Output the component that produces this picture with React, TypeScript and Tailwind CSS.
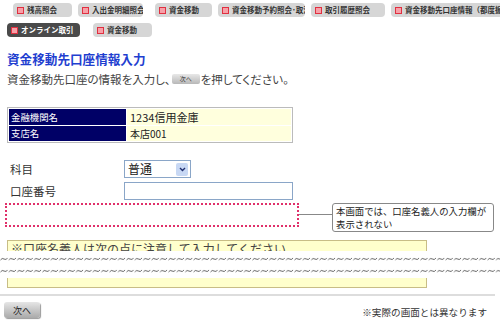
import React from 'react'

const jp = { fontFamily: '"Noto Sans CJK JP", "Noto Sans", sans-serif' }

function Tab({ label, dark = false, className = '' }: { label: string; dark?: boolean; className?: string }) {
  return (
    <div
      className={`flex h-[14px] shrink-0 items-center gap-[3px] overflow-hidden whitespace-nowrap rounded-[4px] pl-[4px] text-[7.5px] font-bold leading-none ${
        dark ? 'bg-[#4a4a4a] text-white' : 'bg-[#d6d6d6] text-[#333]'
      } ${className}`}
    >
      <span className="h-[7px] w-[7px] shrink-0 border border-[#e03040] bg-[#f7a0a8]" />
      {label}
    </div>
  )
}

function Wave() {
  return (
    <svg width="500" height="6" className="block">
      <defs>
        <pattern id="w" width="8.4" height="6" patternUnits="userSpaceOnUse">
          <path d="M0.5 4 Q2 1.5 4 3 T7.5 2" fill="none" stroke="#555" strokeWidth="0.9" />
        </pattern>
      </defs>
      <rect width="500" height="6" fill="url(#w)" />
    </svg>
  )
}

export default function App() {
  return (
    <div className="relative h-[323px] w-[500px] overflow-hidden bg-white text-[#333]" style={jp}>
      {/* tabs */}
      <div className="flex h-[17px] items-end gap-[6px] pl-[13px]">
        <Tab label="残高照会" className="w-[59px]" />
        <Tab label="入出金明細照会" className="w-[65px]" />
        <Tab label="資金移動" className="ml-[6px] w-[57px]" />
        <Tab label="資金移動予約照会･取消" className="w-[87px]" />
        <Tab label="取引履歴照会" className="w-[74px]" />
        <Tab label="資金移動先口座情報（都度振込）" className="w-[120px]" />
      </div>
      <div className="flex h-[20px] items-end gap-[13px] pl-[7px]">
        <Tab dark label="オンライン取引" className="w-[73px]" />
        <Tab label="資金移動" className="w-[59px]" />
      </div>

      {/* title */}
      <h1 className="h-[30px] pl-[7px] pt-[14px] text-[12.6px] font-bold leading-[16px] text-[#1f3fd0]">
        資金移動先口座情報入力
      </h1>
      <p className="flex h-[20px] items-center pl-[7px] pt-[3px] text-[11.5px] leading-[16px] text-[#444] [font-feature-settings:'palt']">
        <span>資金移動先口座の情報を入力し、</span>
        <span className="mx-[1px] inline-flex h-[10px] w-[28px] items-center justify-center rounded-[2px] bg-gradient-to-b from-[#e8e8e8] to-[#b8b8b8] text-[6px] leading-none text-[#333]">
          次へ
        </span>
        を押してください。
      </p>

      {/* bank table */}
      <div className="ml-[7px] mt-[20px] h-[36px] w-[286px] border border-[#bbb] p-[1px]">
        <div className="flex h-[16px] text-[9.4px] leading-[16px]">
          <div className="w-[117px] bg-[#000066] pl-[2px] text-white">金融機関名</div>
          <div className="ml-[1px] flex-1 bg-[#ffffdd] pl-[3px] text-[11px] text-[#222]">1234信用金庫</div>
        </div>
        <div className="mt-[1px] flex h-[15px] text-[9.4px] leading-[15px]">
          <div className="w-[117px] bg-[#000066] pl-[2px] text-white">支店名</div>
          <div className="ml-[1px] flex-1 bg-[#ffffdd] pl-[3px] text-[10px] text-[#222]">本店001</div>
        </div>
      </div>

      {/* form */}
      <div className="mt-[17px] flex h-[18px] items-center">
        <span className="w-[124px] pl-[10px] text-[11.5px] leading-[16px]">科目</span>
        <div className="flex h-[18px] w-[67px] items-center justify-between border border-[#8aa6c8] pl-[3px] pr-[2px] text-[12px] leading-none text-[#222]">
          普通
          <span className="flex h-[13px] w-[12px] items-center justify-center rounded-[2px] bg-[#c8d8f4]">
            <svg width="7" height="5" viewBox="0 0 7 5">
              <path d="M1 1 L3.5 3.5 L6 1" fill="none" stroke="#203070" strokeWidth="1.4" />
            </svg>
          </span>
        </div>
      </div>
      <div className="mt-[4px] flex h-[18px] items-center">
        <span className="w-[124px] pl-[10px] text-[11.5px] leading-[16px]">口座番号</span>
        <div className="h-[18px] w-[169px] border border-[#8aa6c8]" />
      </div>

      {/* hidden field + callout */}
      <div className="mt-[3px] flex h-[29px] items-start">
        <div className="ml-[5px] h-[24px] w-[294px] border-2 border-dotted border-[#e0306a]" />
        <div className="mt-[11px] h-px w-[33px] bg-[#888]" />
        <div className="h-[29px] w-[162px] whitespace-nowrap rounded-[3px] border border-[#888] px-[3px] pt-[1px] text-[9.4px] leading-[13px] text-[#222]">
          本画面では、口座名義人の入力欄が
          <br />
          表示されない
        </div>
      </div>

      {/* notice cut */}
      <div className="ml-[7px] mt-[8px] h-[11px] w-[420px] overflow-hidden border border-b-0 border-[#c8bd86] bg-[#ffffcc] pl-[3px] pt-[2px] text-[12px] leading-[12px] text-[#444]">
        ※口座名義人は次の点に注意して入力してください。
      </div>
      <div className="mt-[5px] h-[6px]">
        <Wave />
      </div>
      <div className="mt-[6px] h-[6px]">
        <Wave />
      </div>
      <div className="ml-[7px] mt-[4px] h-[10px] w-[420px] border border-t-0 border-[#c8bd86] bg-[#ffffcc]" />

      <div className="mt-[6px] h-[2px] w-[495px] bg-[#ddd]" />

      <div className="flex h-[22px] items-end justify-between pr-[13px]">
        <div className="ml-[4px] flex h-[16px] w-[36px] items-center justify-center rounded-[3px] bg-gradient-to-b from-[#e6e6e6] to-[#aaa] text-[9px] leading-none text-[#222] shadow-[1px_1px_1px_#999]">
          次へ
        </div>
        <span className="text-[9.6px] leading-[12px] text-[#333]">※実際の画面とは異なります</span>
      </div>
    </div>
  )
}
